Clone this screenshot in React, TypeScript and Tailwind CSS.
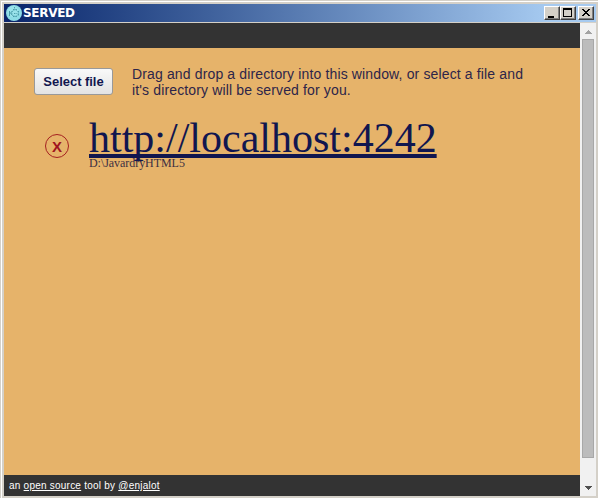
import React from 'react';

function TitleButton({ children, label, className = '' }: { children: React.ReactNode; label: string; className?: string }) {
  return (
    <button
      aria-label={label}
      className={`h-[14px] w-4 shrink-0 border border-b-[#404040] border-l-white border-r-[#404040] border-t-white bg-[#d4d0c8] shadow-[inset_-1px_-1px_0_#808080] ${className}`}
    >
      <svg width="14" height="12" viewBox="0 0 14 12" shapeRendering="crispEdges" className="block">
        {children}
      </svg>
    </button>
  );
}

function AppIcon() {
  return (
    <svg width="16" height="16" viewBox="0 0 16 16" className="shrink-0">
      <circle cx="8" cy="8" r="8" fill="#8ddce5" />
      <circle cx="7" cy="6.5" r="5.5" fill="#a3e7ed" opacity=".6" />
      <g fill="none" stroke="#4a9dab" strokeWidth="1">
        <path d="M3.500 6v5M6.500 6l-2 2 2 2.500" />
        <path d="M7 4.500h4M7 11.500h4M12.500 6v2M12.500 9v2M8 8.500h3M8.500 2v2" strokeDasharray="1 .6" />
        <circle cx="9" cy="8" r="3.200" strokeDasharray="1.200 1" />
      </g>
    </svg>
  );
}

function TitleBar() {
  return (
    <div className="flex h-[18px] shrink-0 items-center bg-linear-to-r from-[#0a246a] to-[#a6caf0] to-92% pl-[2px] pr-[2px]">
      <AppIcon />
      <span className="ml-[1px] mr-auto font-['DejaVu_Sans',sans-serif] text-[12px] font-bold leading-[18px] tracking-[-0.3px] text-white">
        SERVED
      </span>
      <TitleButton label="Minimize">
        <path d="M3 9h6v2H3z" fill="#000" />
      </TitleButton>
      <TitleButton label="Maximize">
        <path d="M2 1h9v9H2zM3 3v6h7V3z" fillRule="evenodd" fill="#000" />
      </TitleButton>
      <TitleButton label="Close" className="ml-[2px]">
        <path d="M3 2h2v1h1v1h2V3h1V2h2v1h-1v1H9v1H8v1h1v1h1v1h1v1H9V8H8V7H6v1H5v1H3V8h1V7h1V6h1V5H5V4H4V3H3z" fill="#000" />
      </TitleButton>
    </div>
  );
}

function ScrollBar() {
  return (
    <div className="flex w-4 shrink-0 flex-col items-center bg-[#f1f1f1]">
      <svg width="16" height="16" shapeRendering="crispEdges" className="shrink-0">
        <path d="M8 7h1v1h1v1h1v1h1v1H5v-1h1V9h1V8h1z" fill="#a3a3a3" />
      </svg>
      <div className="w-3 flex-1 border border-[#a8a8a8] bg-[#bcbcbc]" />
      <svg width="16" height="38" shapeRendering="crispEdges" className="shrink-0">
        <path d="M5 28h7v1h-1v1h-1v1H9v1H8v-1H7v-1H6v-1H5z" fill="#505050" />
      </svg>
    </div>
  );
}

function Page() {
  return (
    <div className="flex min-w-0 flex-1 flex-col">
      <header className="h-[25px] shrink-0 bg-[#333]" />
      <main className="flex-1 bg-[#e6b36a] text-[#11164f]">
        <div className="flex pl-[30px] pt-[18px]">
          <button className="mt-[2px] h-[27px] w-[79px] shrink-0 whitespace-nowrap rounded-[3px] border border-[#999] bg-linear-to-b from-[#f9f9f9] to-[#e3e3e3] font-['Liberation_Sans',Arial,sans-serif] text-[13px] font-bold leading-[25px] tracking-[-0.04px] text-[#11164f]">
            Select file
          </button>
          <p className="ml-[19px] whitespace-nowrap font-['Liberation_Sans',Arial,sans-serif] text-[14px] leading-4 tracking-[0.14px] text-[#2d2549]">
            Drag and drop a directory into this window, or select a file and
            <br />
            it's directory will be served for you.
          </p>
        </div>
        <div className="flex pl-[41px] pt-4 font-['Liberation_Serif','Times_New_Roman',serif]">
          <button aria-label="Remove" className="mt-[20px] flex size-6 shrink-0 items-center justify-center rounded-full border border-[#a52020] font-['Liberation_Sans',Arial,sans-serif] text-[15px] font-bold leading-none text-[#a01420]">
            X
          </button>
          <div className="ml-5 whitespace-nowrap">
            <a className="block h-[42px] text-[42px] leading-[48px] underline decoration-[4px] underline-offset-[2px] [text-decoration-skip-ink:none]">
              http://localhost:4242
            </a>
            <div className="text-[12px] leading-[14px] tracking-[-0.05px] text-[#3d3042]">D:\JavardryHTML5</div>
          </div>
        </div>
      </main>
      <footer className="h-[21px] shrink-0 whitespace-nowrap bg-[#333] pl-[5px] font-['Liberation_Sans',Arial,sans-serif] text-[10px] leading-[21px] tracking-[0.23px] text-white">
        an <a className="underline">open source</a> tool by <a className="underline">@enjalot</a>
      </footer>
    </div>
  );
}

export default function App() {
  return (
    <div className="h-[498px] w-[598px] overflow-hidden bg-[#d4d0c8] pl-px pt-px">
      <div className="flex h-[497px] w-[597px] flex-col border-l border-t border-white pb-[2px] pl-[2px] pr-[2px] pt-[2px]">
        <TitleBar />
        <div className="mt-px flex min-h-0 flex-1">
          <Page />
          <ScrollBar />
        </div>
      </div>
    </div>
  );
}
